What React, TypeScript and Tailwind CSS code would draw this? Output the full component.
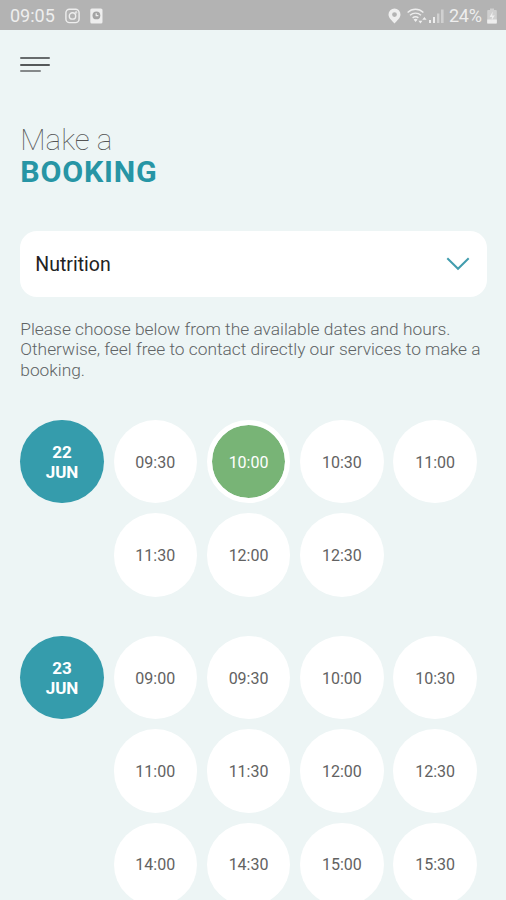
import { useState } from "react";

interface BookingDay {
    day: string;
    month: string;
    hours: string[];
}

interface DayRowProps {
    booking: BookingDay;
    selected: string;
    onSelect: (key: string) => void;
}

const days: BookingDay[] = [
    {
        day: "22",
        month: "JUN",
        hours: ["09:30", "10:00", "10:30", "11:00", "11:30", "12:00", "12:30"],
    },
    {
        day: "23",
        month: "JUN",
        hours: [
            "09:00", "09:30", "10:00", "10:30",
            "11:00", "11:30", "12:00", "12:30",
            "14:00", "14:30", "15:00", "15:30",
        ],
    },
];

const StatusBar: React.FC = () => (
    <header className="flex h-[30px] shrink-0 items-center justify-between bg-[#b3b3b3] pt-px pr-[9px] pl-[10px] text-[#eeeeee]">
        <div className="flex items-center">
            <span className="w-[46px] pt-px text-[18px] leading-none whitespace-nowrap">09:05</span>
            <svg className="ml-[9px]" width="15" height="16" viewBox="0 0 15 16" fill="none" stroke="currentColor" strokeWidth="1.4">
                <rect x="0.9" y="1.2" width="13.2" height="13.4" rx="3.6" />
                <circle cx="7.5" cy="7.9" r="3.2" />
                <circle cx="11.2" cy="4.4" r="0.4" />
            </svg>
            <svg className="ml-[10px]" width="13" height="16" viewBox="0 0 13 16">
                <rect x="0.3" y="0.5" width="12.2" height="15" rx="1.6" fill="currentColor" />
                <circle cx="6.4" cy="7.4" r="3.9" fill="#a4a4a4" />
                <path d="M6.2 5.2v2.4h2.2" stroke="currentColor" strokeWidth="1.2" fill="none" />
            </svg>
        </div>
        <div className="flex items-center">
            {/* Location */}
            <svg width="13" height="16" viewBox="0 0 13 16" fill="currentColor">
                <path fillRule="evenodd" d="M6.5 .6a6 6 0 0 0-6 6c0 3.6 3.6 6.2 6 9 2.4-2.8 6-5.4 6-9a6 6 0 0 0-6-6Zm0 3.6a2.4 2.4 0 1 1 0 4.8 2.4 2.4 0 0 1 0-4.8Z" />
            </svg>
            {/* Wifi */}
            <svg className="ml-[6px]" width="21" height="16" viewBox="0 0 21 16" fill="none" stroke="currentColor" strokeWidth="1.4">
                <path d="M.6 4.4c4.6-4.2 11.2-4.2 15.8 0M3 7.2c3.2-2.8 7.8-2.8 11 0M5.6 9.9c1.8-1.5 4-1.5 5.8 0" />
                <path d="M8.6 14 6.6 11.6c1.2-1 2.8-1 4 0ZM13.4 15.4l-2-2.6h4ZM17.4 9l2.2 2.8h-4.4Z" fill="currentColor" stroke="none" />
            </svg>
            {/* Signal */}
            <svg className="ml-[1px]" width="15" height="14" viewBox="0 0 15 14" fill="currentColor">
                <path d="M0 11h2v3H0zM4 8h2v6H4z" />
                <path d="M8 4.5h2.4V14H8zM12 .5h2.6V14H12z" opacity=".5" />
            </svg>
            <span className="ml-[5px] w-[35px] pt-px text-[18px] leading-none tracking-[-0.3px] whitespace-nowrap">24%</span>
            {/* Battery */}
            <svg className="ml-[3px]" width="10" height="16" viewBox="0 0 10 16" fill="currentColor">
                <path d="M3 .4h4V2h1.6c.8 0 1.2.4 1.2 1.2v11.2c0 .8-.4 1.2-1.2 1.2H1.4c-.8 0-1.2-.4-1.2-1.2V3.2C.2 2.4.6 2 1.4 2H3Z" opacity=".5" />
                <path d="M.2 11.6h9.6v2.8c0 .8-.4 1.2-1.2 1.2H1.4c-.8 0-1.2-.4-1.2-1.2ZM5.8 3.6 2.6 9H5l-.6 3.6L7.8 7.6H5.2Z" />
            </svg>
        </div>
    </header>
);

const DayRow: React.FC<DayRowProps> = ({ booking, selected, onSelect }) => (
    <section className="flex gap-[9.9px]">
        <div className="flex size-[83.4px] shrink-0 flex-col items-center justify-center rounded-full bg-[#359cac] text-[17px] leading-5 font-bold text-white">
            <span>{booking.day}</span>
            <span>{booking.month}</span>
        </div>
        <div className="grid grid-cols-[repeat(4,83.4px)] gap-[9.9px]">
            {booking.hours.map((hour) => {
                const key = `${booking.day}-${hour}`;
                const active = key === selected;
                return (
                    <button
                        key={key}
                        onClick={() => onSelect(key)}
                        className={
                            active
                                ? "size-[83.4px] rounded-full border-5 border-white bg-[#78b476] bg-clip-padding pt-[2px] text-[16px] leading-5 text-white"
                                : "size-[83.4px] rounded-full bg-white pt-[2px] text-[16px] leading-5 text-[#626262]"
                        }
                    >
                        {hour}
                    </button>
                );
            })}
        </div>
    </section>
);

export default function App() {
    const [selected, setSelected] = useState<string>("22-10:00");

    return (
        <div className="flex h-[900px] w-[506px] flex-col overflow-hidden bg-[#edf5f5] font-[Roboto,sans-serif]">
            <StatusBar />
            <main className="flex flex-col pl-[20.3px]">
                <button aria-label="Menu" className="mt-[27px] flex h-[17px] w-[30px] flex-col gap-[4.5px]">
                    <span className="h-[2px] w-full rounded-full bg-[#676b6c]" />
                    <span className="h-[2px] w-full rounded-full bg-[#55595a]" />
                    <span className="h-[2px] w-[21px] rounded-full bg-[#85898a]" />
                </button>

                <h1 className="mt-[50px] text-[#555555]">
                    <span className="block text-[29.5px] leading-8 font-thin">Make a</span>
                    <span className="block text-[30.4px] leading-8 font-bold tracking-[0.8px] text-[#2795a5]">BOOKING</span>
                </h1>

                <button className="mt-[43px] flex h-[66px] w-[467px] items-center justify-between rounded-[17px] bg-white pr-[17px] pl-[15px]">
                    <span className="pt-[2px] text-[19.5px] text-[#222222]">Nutrition</span>
                    <svg width="24" height="14" viewBox="0 0 24 14" fill="none" stroke="#429dae" strokeWidth="2">
                        <path d="M1.3 1.2 12 11.8 22.7 1.2" />
                    </svg>
                </button>

                <p className="mt-[22px] text-[17.33px] leading-[20.3px] font-light whitespace-nowrap text-[#606465]">
                    Please choose below from the available dates and hours.
                    <br />
                    Otherwise, feel free to contact directly our services to make a
                    <br />
                    booking.
                </p>

                <div className="mt-[40px] flex flex-col gap-[39.5px]">
                    {days.map((booking) => (
                        <DayRow
                            key={booking.day}
                            booking={booking}
                            selected={selected}
                            onSelect={setSelected}
                        />
                    ))}
                </div>
            </main>
        </div>
    );
}
